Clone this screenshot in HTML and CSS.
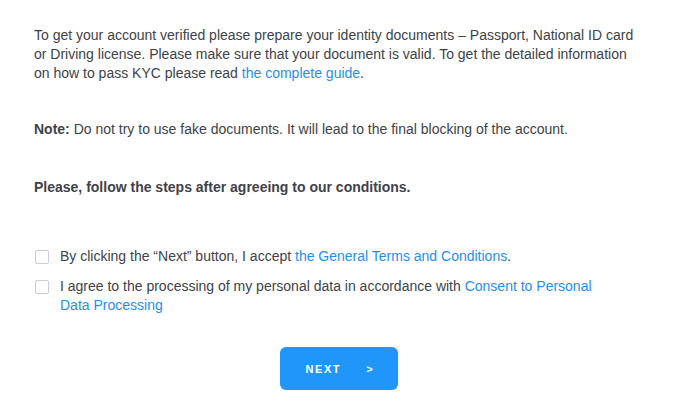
FILE: index.html
```html
<!DOCTYPE html>
<html>
<head>
<meta charset="utf-8">
<link rel="stylesheet" href="styles.css">
</head>
<body>
<div class="content">
  <p class="intro">To get your account verified please prepare your identity documents – Passport, National ID card or Driving license. Please make sure that your document is valid. To get the detailed information on how to pass KYC please read <a href="#">the complete guide</a>.</p>
  <p class="note"><b>Note:</b> Do not try to use fake documents. It will lead to the final blocking of the account.</p>
  <p class="steps">Please, follow the steps after agreeing to our conditions.</p>
  <div class="checks">
    <label class="check"><span class="box"></span><span class="label">By clicking the “Next” button, I accept <a href="#">the General Terms and Conditions</a>.</span></label>
    <label class="check"><span class="box"></span><span class="label">I agree to the processing of my personal data in accordance with <a href="#">Consent to Personal Data Processing</a></span></label>
  </div>
  <div class="actions">
    <button class="next"><span>NEXT</span><span class="arrow">&gt;</span></button>
  </div>
</div>
</body>
</html>
```
FILE: styles.css
```css
html, body {
  margin: 0;
  background: #ffffff;
}
body {
  font-family: "Liberation Sans", Arial, sans-serif;
  font-size: 14px;
  line-height: 19px;
  color: #3e4249;
}
.content {
  padding: 26px 34px 0 34px;
}
p {
  margin: 0;
}
.intro {
  max-width: 605px;
}
a {
  color: #1f8ef5;
  text-decoration: none;
}
.note {
  margin-top: 37px;
}
.note b {
  font-weight: bold;
}
.steps {
  margin-top: 39px;
  font-weight: bold;
}
.checks {
  margin-top: 50px;
  display: flex;
  flex-direction: column;
  gap: 11px;
}
.check {
  display: flex;
  align-items: flex-start;
  gap: 11px;
}
.box {
  flex: none;
  width: 12px;
  height: 12px;
  border: 1.5px solid #cbcbe3;
  border-radius: 2px;
  margin-top: 3px;
  margin-left: 1px;
}
.label {
  max-width: 545px;
}
.actions {
  margin-top: 32px;
  display: flex;
  padding-left: 246px;
}
.next {
  width: 118px;
  height: 43px;
  border: none;
  border-radius: 6px;
  background: #2196fa;
  color: #ffffff;
  font-family: "Liberation Sans", Arial, sans-serif;
  font-weight: bold;
  font-size: 11px;
  letter-spacing: 1.6px;
  display: flex;
  align-items: center;
  justify-content: center;
  gap: 25px;
  padding: 0;
}
.arrow {
  letter-spacing: 0;
}
```
